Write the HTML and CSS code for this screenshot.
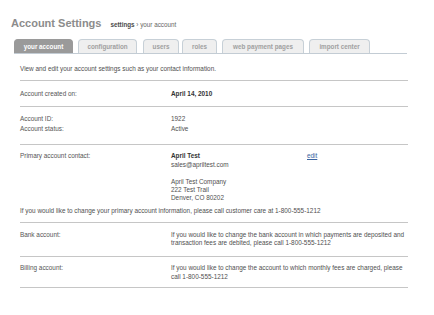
FILE: index.html
```html
<!DOCTYPE html>
<html>
<head>
<meta charset="utf-8">
<link rel="stylesheet" href="styles.css">
</head>
<body>
<div class="page">
  <div class="header">
    <h1 class="title">Account Settings</h1>
    <span class="crumb"><b>settings</b> › your account</span>
  </div>
  <div class="tabs">
    <span class="tab active t1">your account</span>
    <span class="tab t2">configuration</span>
    <span class="tab t3">users</span>
    <span class="tab t4">roles</span>
    <span class="tab t5">web payment pages</span>
    <span class="tab t6">import center</span>
  </div>
  <div class="content">
    <div class="intro">View and edit your account settings such as your contact information.</div>
    <div class="row r-created">
      <div class="label">Account created on:</div>
      <div class="value"><b>April 14, 2010</b></div>
    </div>
    <div class="row r-id">
      <div class="pair"><div class="label">Account ID:</div><div class="value">1922</div></div>
      <div class="pair"><div class="label">Account status:</div><div class="value">Active</div></div>
    </div>
    <div class="row r-contact">
      <div class="pair">
        <div class="label">Primary account contact:</div>
        <div class="value contact">
          <div class="name"><b>April Test</b><br>sales@apriltest.com</div>
          <div class="addr">April Test Company<br>222 Test Trail<br>Denver, CO 80202</div>
        </div>
        <a class="edit" href="#">edit</a>
      </div>
      <div class="note">If you would like to change your primary account information, please call customer care at 1-800-555-1212</div>
    </div>
    <div class="row r-bank">
      <div class="label">Bank account:</div>
      <div class="value wide">If you would like to change the bank account in which payments are deposited and transaction fees are debited, please call 1-800-555-1212</div>
    </div>
    <div class="row r-bill">
      <div class="label">Billing account:</div>
      <div class="value wide">If you would like to change the account to which monthly fees are charged, please call 1-800-555-1212</div>
    </div>
  </div>
</div>
</body>
</html>
```
FILE: styles.css
```css
html, body {
  margin: 0;
  padding: 0;
  background: #fff;
}
body {
  font-family: "Liberation Sans", Arial, sans-serif;
  font-size: 6.4px;
  color: #505050;
}
.page {
  width: 434px;
}
.header {
  display: flex;
  align-items: baseline;
  padding: 17px 0 0 11px;
  height: 22px;
}
.title {
  margin: 0;
  font-size: 11px;
  line-height: 13px;
  font-weight: bold;
  color: #8c8c8c;
}
.crumb {
  margin-left: 9px;
  font-size: 6.3px;
  color: #666666;
}
.crumb b {
  color: #4a4a4a;
}
.tabs {
  display: flex;
  margin: 0 27px 0 14px;
  height: 14px;
  border-bottom: 1px solid #c3ccd4;
  gap: 5px;
}
.tab {
  box-sizing: border-box;
  height: 14px;
  line-height: 13px;
  text-align: center;
  font-weight: bold;
  font-size: 6.3px;
  color: #a0a0a0;
  background: #efefef;
  border: 1px solid #c7d0d7;
  border-bottom: none;
  border-radius: 4px 4px 0 0;
}
.tab.active {
  background: #9a9a9a;
  border-color: #9a9a9a;
  color: #ffffff;
}
.t1 { width: 59px; }
.t2 { width: 59px; }
.t3 { width: 36px; margin-left: 1px; }
.t4 { width: 35px; margin-left: -2px; }
.t5 { width: 82px; }
.t6 { width: 61px; }
.content {
  margin: 0 26px 0 20px;
}
.intro {
  padding: 10px 0 7px;
  line-height: 9px;
  color: #505050;
  border-bottom: 1px solid #c6c6c6;
}
.row {
  border-bottom: 1px solid #c6c6c6;
  line-height: 9px;
}
.row, .pair {
  display: flex;
}
.row.r-id, .row.r-contact {
  flex-direction: column;
}
.label {
  width: 151px;
  flex: none;
  color: #555555;
}
.value {
  color: #505050;
}
.value b, .name b {
  color: #333333;
}
.r-created {
  padding: 8px 0 8px;
}
.r-id {
  padding: 7px 0 10px;
  line-height: 10px;
}
.r-contact {
  padding: 6px 0 7px;
}
.contact {
  width: 136px;
  flex: none;
}
.name {
  margin-bottom: 9px;
}
.addr {
  line-height: 8px;
}
.edit {
  color: #3a64a0;
}
.note {
  margin-top: 4px;
  color: #505050;
}
.r-bank, .r-bill {
  line-height: 8.5px;
}
.r-bank {
  padding: 7.5px 0 8px;
}
.r-bill {
  padding: 7.5px 0 6px;
}
.wide {
  flex: 1;
}
```
